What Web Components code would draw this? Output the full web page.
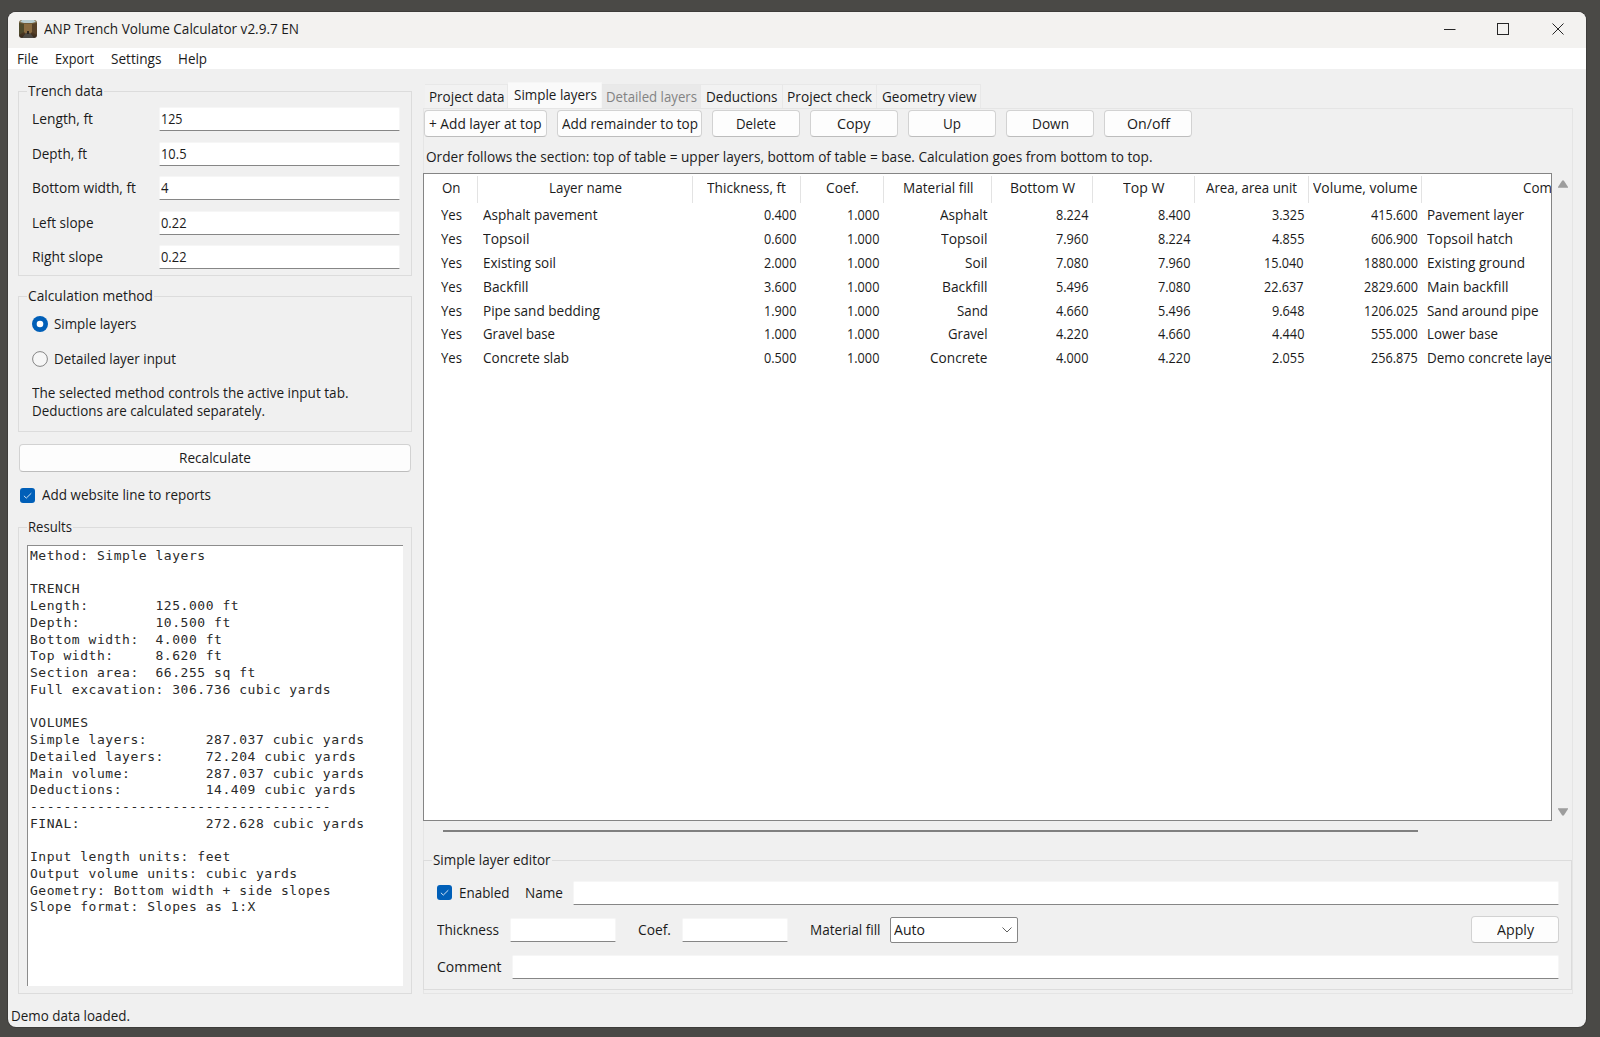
<!DOCTYPE html>
<html lang="en">
<head>
<meta charset="utf-8">
<title>ANP Trench Volume Calculator</title>
<style>
    html, body {
        margin: 0;
        height: 100%;
    }
    body {
        background: #4a4946;
        overflow: hidden;
        font-family: "Open Sans", "Noto Sans", sans-serif;
        font-size: 13.7px;
        color: #1b1b1b;
    }
</style>
</head>
<body>
<trench-app></trench-app>

<script>
// Single line of text squeezed to the width given in "w"
class UiText extends HTMLElement {
    constructor() {
        super();
        this.attachShadow({ mode: 'open' });
        this.shadowRoot.innerHTML = `
            <style>
                :host {
                    display: block;
                    flex: none;
                    height: 20px;
                    line-height: 20px;
                    text-align: left;
                }
                span {
                    display: inline-block;
                    vertical-align: top;
                    white-space: nowrap;
                    transform-origin: 0 50%;
                }
            </style>
            <span><slot></slot></span>
        `;
    }

    connectedCallback() {
        const span = this.shadowRoot.querySelector('span');
        const natural = span.getBoundingClientRect().width;
        const width = parseFloat(this.getAttribute('w')) || natural * 0.92;
        this.style.width = width + 'px';
        span.style.transform = `scaleX(${width / natural})`;
    }
}

class UiGroup extends HTMLElement {
    constructor() {
        super();
        this.attachShadow({ mode: 'open' });
        this.shadowRoot.innerHTML = `
            <style>
                :host {
                    display: flex;
                    flex-direction: column;
                    box-sizing: border-box;
                    border: 1px solid #dcdcdc;
                }
                .legend {
                    display: flex;
                    align-self: flex-start;
                    height: 20px;
                    margin: -11px 0 0 8px;
                    padding: 0 1px;
                    background: #f0f0f0;
                }
            </style>
            <div class="legend"><slot name="legend"></slot></div>
            <slot></slot>
        `;
    }
}

class UiButton extends HTMLElement {
    constructor() {
        super();
        this.attachShadow({ mode: 'open' });
        this.shadowRoot.innerHTML = `
            <style>
                :host {
                    display: flex;
                    align-items: center;
                    justify-content: center;
                    box-sizing: border-box;
                    flex: none;
                    height: 27px;
                    border: 1px solid #d2d2d2;
                    border-bottom-color: #bdbdbd;
                    border-radius: 4px;
                    background: #fdfdfd;
                }
            </style>
            <slot></slot>
        `;
    }
}

class UiEntry extends HTMLElement {
    constructor() {
        super();
        this.attachShadow({ mode: 'open' });
        this.shadowRoot.innerHTML = `
            <style>
                :host {
                    display: flex;
                    align-items: center;
                    box-sizing: border-box;
                    height: 24px;
                    padding-left: 1.5px;
                    border: 1px solid #f6f6f6;
                    border-bottom: 1px solid #868686;
                    border-radius: 2px 2px 1px 1px;
                    background: #fff;
                }
            </style>
            <slot></slot>
        `;
    }
}

class UiField extends HTMLElement {
    constructor() {
        super();
        this.attachShadow({ mode: 'open' });
        this.shadowRoot.innerHTML = `
            <style>
                :host {
                    display: grid;
                    grid-template-columns: 126.5px 241px;
                    align-items: center;
                    height: 34.6px;
                }
            </style>
            <slot name="label"></slot>
            <ui-entry><slot></slot></ui-entry>
        `;
    }
}

class UiCheck extends HTMLElement {
    constructor() {
        super();
        this.attachShadow({ mode: 'open' });
        this.shadowRoot.innerHTML = `
            <style>
                :host {
                    display: flex;
                    align-items: center;
                    gap: 6.5px;
                    height: 20px;
                }
                svg { flex: none; }
            </style>
            <svg width="15" height="15" viewBox="0 0 15 15">
                <rect width="15" height="15" rx="3" fill="#005fb8"/>
                <path d="M3.9 7.8l2.4 2.3 5-4.9" fill="none" stroke="#cfe2f4" stroke-width="1"/>
            </svg>
            <slot></slot>
        `;
    }
}

class UiRadio extends HTMLElement {
    constructor() {
        super();
        this.attachShadow({ mode: 'open' });
        const dot = this.hasAttribute('checked')
            ? '<circle cx="8" cy="8" r="8" fill="#005fb8"/><circle cx="8" cy="8" r="3.3" fill="#fff"/>'
            : '<circle cx="8" cy="8" r="7.4" fill="#f6f6f6" stroke="#858585"/>';
        this.shadowRoot.innerHTML = `
            <style>
                :host {
                    display: flex;
                    align-items: center;
                    gap: 6px;
                    height: 34.8px;
                }
            </style>
            <svg width="16" height="16" viewBox="0 0 16 16">${dot}</svg>
            <slot></slot>
        `;
    }
}

class TitleBar extends HTMLElement {
    constructor() {
        super();
        this.attachShadow({ mode: 'open' });
        this.shadowRoot.innerHTML = `
            <style>
                :host {
                    display: flex;
                    align-items: center;
                    flex: none;
                    height: 36px;
                    padding: 0 21px 2px 10.5px;
                    box-sizing: border-box;
                    background: #f3f2f0;
                }
                .icon { margin-right: 7.5px; }
                .controls { margin-left: auto; }
            </style>
            <svg class="icon" width="18" height="18" viewBox="0 0 18 18">
                <defs>
                    <linearGradient id="soil" x1="0" y1="0" x2="0" y2="1">
                        <stop offset="0" stop-color="#7d6b45"/>
                        <stop offset=".5" stop-color="#5d4325"/>
                        <stop offset="1" stop-color="#35281c"/>
                    </linearGradient>
                </defs>
                <rect width="18" height="18" rx="3" fill="url(#soil)"/>
                <path d="M3 0h12l2 2-4 1H5L1 2z" fill="#b9cdd0"/>
                <path d="M0 3l5 1v8l-5 3z" fill="#4f4a2c"/>
                <path d="M18 3l-5 1v8l5 3z" fill="#574128"/>
                <path d="M5 4h8v8l-2 2H7l-2-2z" fill="#8a6c42"/>
                <path d="M7 13h4l4 5H3z" fill="#4d4a44"/>
                <path d="M8 11h2v3H8z" fill="#2c2620"/>
            </svg>
            <ui-text w="255">ANP Trench Volume Calculator v2.9.7 EN</ui-text>
            <svg class="controls" width="122" height="14" viewBox="0 0 122 14" fill="none" stroke="#262626">
                <path d="M1 7.5h11.5"/>
                <rect x="54.5" y="1.5" width="11" height="11"/>
                <path d="M109.5 1.5l11 11M120.5 1.5l-11 11"/>
            </svg>
        `;
    }
}

class MenuBar extends HTMLElement {
    constructor() {
        super();
        this.attachShadow({ mode: 'open' });
        this.shadowRoot.innerHTML = `
            <style>
                :host {
                    display: flex;
                    align-items: center;
                    flex: none;
                    gap: 16.7px;
                    height: 21px;
                    padding: 0 9px;
                    background: #fff;
                }
            </style>
            <ui-text w="21.5">File</ui-text>
            <ui-text w="39">Export</ui-text>
            <ui-text w="50.5">Settings</ui-text>
            <ui-text w="29">Help</ui-text>
        `;
    }
}

class ResultsBox extends HTMLElement {
    constructor() {
        super();
        this.attachShadow({ mode: 'open' });
        const lines = [
            'Method: Simple layers',
            '',
            'TRENCH',
            'Length:        125.000 ft',
            'Depth:         10.500 ft',
            'Bottom width:  4.000 ft',
            'Top width:     8.620 ft',
            'Section area:  66.255 sq ft',
            'Full excavation: 306.736 cubic yards',
            '',
            'VOLUMES',
            'Simple layers:       287.037 cubic yards',
            'Detailed layers:     72.204 cubic yards',
            'Main volume:         287.037 cubic yards',
            'Deductions:          14.409 cubic yards',
            '------------------------------------',
            'FINAL:               272.628 cubic yards',
            '',
            'Input length units: feet',
            'Output volume units: cubic yards',
            'Geometry: Bottom width + side slopes',
            'Slope format: Slopes as 1:X'
        ];
        this.shadowRoot.innerHTML = `
            <style>
                :host {
                    display: block;
                    box-sizing: border-box;
                    border-top: 1px solid #8c8c8c;
                    border-left: 1px solid #8c8c8c;
                    background: #fff;
                }
                pre {
                    margin: 0;
                    padding: 2px 0 0 2px;
                    font: 13px/16.74px "DejaVu Sans Mono", monospace;
                    letter-spacing: 0.54px;
                    color: #2a2a2a;
                }
            </style>
            <pre>${lines.join('\n')}</pre>
        `;
    }
}

class InputPanel extends HTMLElement {
    constructor() {
        super();
        this.attachShadow({ mode: 'open' });
        this.shadowRoot.innerHTML = `
            <style>
                :host {
                    display: flex;
                    flex-direction: column;
                    width: 394px;
                }
                ui-field, ui-radio, .note { margin-left: 13px; }
                .trench { height: 185px; }
                .fields { margin-top: .7px; }
                .method { height: 136px; margin-top: 20px; }
                .radios { margin-top: 1px; }
                .note {
                    display: flex;
                    flex-direction: column;
                    margin-top: 7px;
                }
                .note ui-text { height: 18px; line-height: 18px; }
                .recalc { margin: 12px 1px 0; height: 28px; }
                .website { margin: 13px 0 0 2px; }
                .results { height: 467px; margin-top: 22px; }
                results-box { flex: 1; margin: 8px 8px 7px 8px; }
            </style>
            <ui-group class="trench">
                <ui-text slot="legend" w="75">Trench data</ui-text>
                <div class="fields">
                    <ui-field><ui-text slot="label" w="61">Length, ft</ui-text><ui-text w="21.5">125</ui-text></ui-field>
                    <ui-field><ui-text slot="label" w="55">Depth, ft</ui-text><ui-text w="25.5">10.5</ui-text></ui-field>
                    <ui-field><ui-text slot="label" w="104">Bottom width, ft</ui-text><ui-text w="7.5">4</ui-text></ui-field>
                    <ui-field><ui-text slot="label" w="61.5">Left slope</ui-text><ui-text w="25.5">0.22</ui-text></ui-field>
                    <ui-field><ui-text slot="label" w="71">Right slope</ui-text><ui-text w="25.5">0.22</ui-text></ui-field>
                </div>
            </ui-group>
            <ui-group class="method">
                <ui-text slot="legend" w="125">Calculation method</ui-text>
                <div class="radios">
                    <ui-radio checked><ui-text w="82.5">Simple layers</ui-text></ui-radio>
                    <ui-radio><ui-text w="122">Detailed layer input</ui-text></ui-radio>
                </div>
                <div class="note">
                    <ui-text w="316.5">The selected method controls the active input tab.</ui-text>
                    <ui-text w="233">Deductions are calculated separately.</ui-text>
                </div>
            </ui-group>
            <ui-button class="recalc"><ui-text w="72">Recalculate</ui-text></ui-button>
            <ui-check class="website"><ui-text w="169">Add website line to reports</ui-text></ui-check>
            <ui-group class="results">
                <ui-text slot="legend" w="44">Results</ui-text>
                <results-box></results-box>
            </ui-group>
        `;
    }
}

class TabStrip extends HTMLElement {
    constructor() {
        super();
        this.attachShadow({ mode: 'open' });
        this.shadowRoot.innerHTML = `
            <style>
                :host {
                    display: flex;
                    align-items: flex-end;
                    height: 26px;
                    padding-left: 1.5px;
                }
                .tab {
                    display: flex;
                    justify-content: center;
                    box-sizing: border-box;
                    height: 24px;
                    padding: 2px 0 0 1px;
                    border: 1px solid #e8e8e8;
                    border-left: 0;
                    border-bottom: 0;
                    background: #f2f2f2;
                }
                .active {
                    height: 26px;
                    background: #fafafa;
                    border-color: #f6f6f6;
                }
                .disabled {
                    background: #e9e9e9;
                    color: #838383;
                }
            </style>
            <div class="tab" style="width: 83.5px"><ui-text w="75.5">Project data</ui-text></div>
            <div class="tab active" style="width: 94px"><ui-text w="83">Simple layers</ui-text></div>
            <div class="tab disabled" style="width: 99px"><ui-text w="91">Detailed layers</ui-text></div>
            <div class="tab" style="width: 81.5px"><ui-text w="71.5">Deductions</ui-text></div>
            <div class="tab" style="width: 94.5px"><ui-text w="85">Project check</ui-text></div>
            <div class="tab" style="width: 103.5px"><ui-text w="94.5">Geometry view</ui-text></div>
        `;
    }
}

class LayerTable extends HTMLElement {
    constructor() {
        super();
        this.attachShadow({ mode: 'open' });
        // [title, title width]
        this.columns = [
            ['On', 18.5], ['Layer name', 73], ['Thickness, ft', 79], ['Coef.', 33], ['Material fill', 70.5],
            ['Bottom W', 65], ['Top W', 41.5], ['Area, area unit', 91], ['Volume, volume', 104.5], ['Comment', 62]
        ];
        this.rows = [
            [['Asphalt pavement', 114.5], '0.400', '1.000', ['Asphalt', 47.5], '8.224', '8.400', '3.325', '415.600', ['Pavement layer', 97]],
            [['Topsoil', 46.5], '0.600', '1.000', ['Topsoil', 46.5], '7.960', '8.224', '4.855', '606.900', ['Topsoil hatch', 86]],
            [['Existing soil', 73], '2.000', '1.000', ['Soil', 22.5], '7.080', '7.960', '15.040', '1880.000', ['Existing ground', 98]],
            [['Backfill', 45.5], '3.600', '1.000', ['Backfill', 45.5], '5.496', '7.080', '22.637', '2829.600', ['Main backfill', 81.5]],
            [['Pipe sand bedding', 117], '1.900', '1.000', ['Sand', 31], '4.660', '5.496', '9.648', '1206.025', ['Sand around pipe', 111.5]],
            [['Gravel base', 72], '1.000', '1.000', ['Gravel', 39.5], '4.220', '4.660', '4.440', '555.000', ['Lower base', 71]],
            [['Concrete slab', 86], '0.500', '1.000', ['Concrete', 57.5], '4.000', '4.220', '2.055', '256.875', ['Demo concrete layer', 130]]
        ];
        this.render();
    }

    cell(value) {
        if (Array.isArray(value)) {
            return `<div><ui-text w="${value[1]}">${value[0]}</ui-text></div>`;
        }
        const width = (value.length - 1) * 7.2 + 3.6;
        return `<div><ui-text w="${width}">${value}</ui-text></div>`;
    }

    render() {
        const head = this.columns.map((c) => this.cell(c)).join('');
        const body = this.rows.map((row) => `
            <div class="row">${this.cell(['Yes', 21])}${row.map((v) => this.cell(v)).join('')}</div>
        `).join('');
        this.shadowRoot.innerHTML = `
            <style>
                :host {
                    display: block;
                    box-sizing: border-box;
                    overflow: hidden;
                    border: 1px solid #858585;
                    background: #fff;
                }
                .head, .row {
                    display: grid;
                    grid-template-columns: 53.4px 215.3px 107.6px 83.5px 108px 101px 102px 113.5px 113.5px 264px;
                }
                .head {
                    height: 27px;
                    padding: 2px 0 0;
                }
                .head div {
                    display: flex;
                    align-items: center;
                    justify-content: center;
                    border-right: 1px solid #e3e3e3;
                    padding: 0 0 3px 1px;
                }
                .row {
                    height: 23.9px;
                    align-items: center;
                }
                .row div {
                    display: flex;
                    justify-content: flex-end;
                    padding-right: 4.7px;
                }
                .row div:nth-child(1) {
                    justify-content: center;
                    padding: 0;
                }
                .row div:nth-child(2), .row div:last-child {
                    justify-content: flex-start;
                    padding-left: 5px;
                }
            </style>
            <div class="head">${head}</div>
            ${body}
        `;
    }
}

class LayerEditor extends HTMLElement {
    constructor() {
        super();
        this.attachShadow({ mode: 'open' });
        this.shadowRoot.innerHTML = `
            <style>
                :host { display: block; }
                ui-group { height: 130px; }
                .row {
                    display: flex;
                    align-items: center;
                    height: 37px;
                    padding: 0 12px 0 13px;
                }
                .first { margin-top: 4.4px; }
                .grow { flex: 1; margin-left: 10px; }
                .short { width: 106px; margin-left: 10.5px; }
                .combo {
                    display: flex;
                    align-items: center;
                    justify-content: space-between;
                    box-sizing: border-box;
                    width: 128px;
                    height: 26px;
                    margin-left: 9.5px;
                    padding: 0 5px 0 3px;
                    border: 1px solid #868686;
                    border-radius: 2px;
                    background: #fff;
                }
            </style>
            <ui-group>
                <ui-text slot="legend" w="117.5">Simple layer editor</ui-text>
                <div class="row first">
                    <ui-check><ui-text w="50.5">Enabled</ui-text></ui-check>
                    <ui-text w="38" style="margin-left: 16px">Name</ui-text>
                    <ui-entry class="grow"></ui-entry>
                </div>
                <div class="row">
                    <ui-text w="62">Thickness</ui-text>
                    <ui-entry class="short"></ui-entry>
                    <ui-text w="33" style="margin-left: 22.5px">Coef.</ui-text>
                    <ui-entry class="short"></ui-entry>
                    <ui-text w="70.5" style="margin-left: 22.5px">Material fill</ui-text>
                    <div class="combo">
                        <ui-text w="31">Auto</ui-text>
                        <svg width="10" height="6" viewBox="0 0 10 6" fill="none" stroke="#606060"><path d="M.5.5L5 5 9.5.5"/></svg>
                    </div>
                    <ui-button style="width: 88px; margin-left: auto"><ui-text w="37">Apply</ui-text></ui-button>
                </div>
                <div class="row">
                    <ui-text w="64.5">Comment</ui-text>
                    <ui-entry class="grow"></ui-entry>
                </div>
            </ui-group>
        `;
    }
}

class LayersPanel extends HTMLElement {
    constructor() {
        super();
        this.attachShadow({ mode: 'open' });
        this.shadowRoot.innerHTML = `
            <style>
                :host {
                    display: flex;
                    flex-direction: column;
                    width: 1150px;
                }
                .page {
                    box-sizing: border-box;
                    height: 886px;
                    border: 1px solid #e5e5e5;
                }
                .toolbar {
                    display: flex;
                    gap: 9.8px;
                    padding-top: 1px;
                }
                .hint { margin: 10px 0 0 1.5px; }
                .view {
                    display: grid;
                    grid-template-columns: 1129px 21px;
                    height: 648px;
                    margin: 6px 0 0 -.6px;
                }
                .vbar {
                    display: flex;
                    flex-direction: column;
                    align-items: center;
                    justify-content: space-between;
                    padding: 6.5px 0 5.5px 1px;
                }
                .hbar {
                    width: 975px;
                    height: 2px;
                    margin: 9px 0 0 19px;
                    background: #808080;
                }
                layer-editor { margin: 28px 0 0 -.6px; }
            </style>
            <tab-strip></tab-strip>
            <div class="page">
                <div class="toolbar">
                    <ui-button style="width: 123px"><ui-text w="112.5">+ Add layer at top</ui-text></ui-button>
                    <ui-button style="width: 145.5px"><ui-text w="136">Add remainder to top</ui-text></ui-button>
                    <ui-button style="width: 88.2px"><ui-text w="40">Delete</ui-text></ui-button>
                    <ui-button style="width: 88.2px"><ui-text w="33.5">Copy</ui-text></ui-button>
                    <ui-button style="width: 88.2px"><ui-text w="18">Up</ui-text></ui-button>
                    <ui-button style="width: 88.2px"><ui-text w="37">Down</ui-text></ui-button>
                    <ui-button style="width: 88.2px"><ui-text w="43">On/off</ui-text></ui-button>
                </div>
                <ui-text class="hint" w="726.5">Order follows the section: top of table = upper layers, bottom of table = base. Calculation goes from bottom to top.</ui-text>
                <div class="view">
                    <layer-table></layer-table>
                    <div class="vbar">
                        <svg width="10" height="8" viewBox="0 0 10 8"><path d="M4.2.5h1.6L10 7v.8H0V7z" fill="#9d9d9d"/></svg>
                        <svg width="10" height="8" viewBox="0 0 10 8"><path d="M4.2 7.5h1.6L10 1V.2H0V1z" fill="#9d9d9d"/></svg>
                    </div>
                </div>
                <div class="hbar"></div>
                <layer-editor></layer-editor>
            </div>
        `;
    }
}

class TrenchApp extends HTMLElement {
    constructor() {
        super();
        this.attachShadow({ mode: 'open' });
        this.shadowRoot.innerHTML = `
            <style>
                :host {
                    display: block;
                    box-sizing: border-box;
                    width: 1600px;
                    height: 1037px;
                    padding: 12px 14px 10px 8px;
                }
                .window {
                    display: flex;
                    flex-direction: column;
                    height: 1015px;
                    border-radius: 8px;
                    overflow: hidden;
                    background: #f0f0f0;
                    box-shadow: 0 0 0 1px #3d3c3a;
                }
                .content {
                    display: flex;
                    align-items: flex-start;
                    flex: 1;
                    padding-left: 10px;
                }
                input-panel { margin-top: 22px; }
                layers-panel { margin: 13px 0 0 11px; }
                .status { margin: 0 0 1.5px 3px; }
            </style>
            <div class="window">
                <title-bar></title-bar>
                <menu-bar></menu-bar>
                <div class="content">
                    <input-panel></input-panel>
                    <layers-panel></layers-panel>
                </div>
                <ui-text class="status" w="119">Demo data loaded.</ui-text>
            </div>
        `;
    }
}

customElements.define('ui-text', UiText);
customElements.define('ui-group', UiGroup);
customElements.define('ui-button', UiButton);
customElements.define('ui-entry', UiEntry);
customElements.define('ui-field', UiField);
customElements.define('ui-check', UiCheck);
customElements.define('ui-radio', UiRadio);
customElements.define('title-bar', TitleBar);
customElements.define('menu-bar', MenuBar);
customElements.define('results-box', ResultsBox);
customElements.define('input-panel', InputPanel);
customElements.define('tab-strip', TabStrip);
customElements.define('layer-table', LayerTable);
customElements.define('layer-editor', LayerEditor);
customElements.define('layers-panel', LayersPanel);
customElements.define('trench-app', TrenchApp);
</script>
</body>
</html>
